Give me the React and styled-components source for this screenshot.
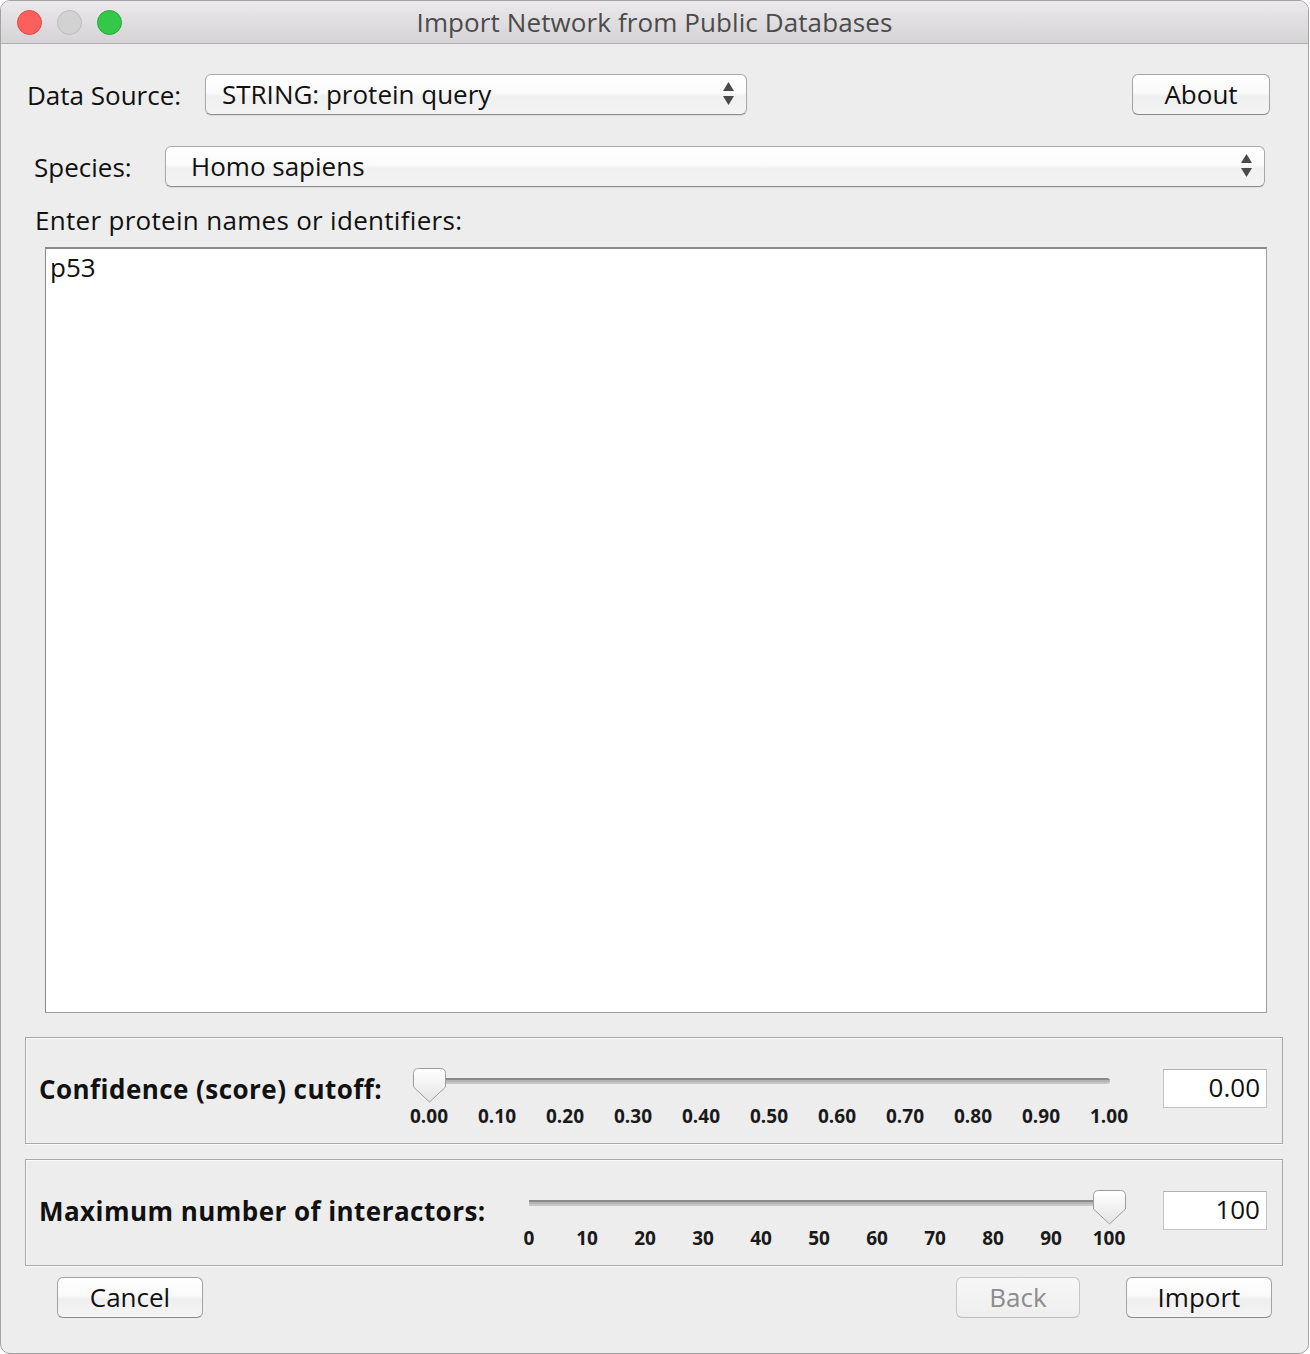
import React from 'react';
import styled, { createGlobalStyle } from 'styled-components';

const GlobalStyle = createGlobalStyle`
  html, body {
    margin: 0;
    padding: 0;
    background: #ffffff;
  }
  * {
    box-sizing: border-box;
  }
`;

const Window = styled.div`
  width: 1309px;
  height: 1354px;
  border: 1px solid #a3a3a3;
  border-radius: 10px;
  overflow: hidden;
  background: #ededed;
  font-family: "Open Sans", "Liberation Sans", sans-serif;
  color: #111;
  display: flex;
  flex-direction: column;
`;

const TitleBar = styled.div`
  height: 42px;
  flex: none;
  display: grid;
  grid-template-columns: 1fr auto 1fr;
  align-items: center;
  background: linear-gradient(#ebe9eb, #d5d3d5);
  border-bottom: 1px solid #b1b1b1;
  box-sizing: content-box;
`;

const Lights = styled.div`
  display: flex;
  gap: 15px;
  padding-left: 16px;
`;

const Light = styled.span`
  width: 25px;
  height: 25px;
  border-radius: 50%;
  background: ${p => p.$fill};
  border: 1px solid ${p => p.$edge};
`;

const Title = styled.div`
  font-size: 26px;
  color: #4b4b4b;
  letter-spacing: 0.1px;
`;

const Body = styled.div`
  flex: 1;
  display: flex;
  flex-direction: column;
`;

const Row = styled.div`
  display: flex;
  align-items: center;
  padding-left: ${p => p.$left}px;
  margin-top: ${p => p.$top}px;
`;

const FieldLabel = styled.div`
  width: ${p => p.$width}px;
  flex: none;
  font-size: 26px;
  line-height: 30px;
`;

const Select = styled.div`
  width: ${p => p.$width}px;
  height: 41px;
  display: flex;
  align-items: center;
  justify-content: space-between;
  padding: 0 12px 2px ${p => p.$pad}px;
  font-size: 26px;
  border: 1px solid #a9a9a9;
  border-bottom-color: #8e8e8e;
  border-radius: 6px;
  background: linear-gradient(#ffffff 0%, #fbfbfb 45%, #f0f0f0 55%, #f3f3f3 100%);
  box-shadow: 0 1px 1px rgba(0, 0, 0, 0.08);
`;

const Button = styled.div`
  width: ${p => p.$width}px;
  height: 41px;
  display: flex;
  align-items: center;
  justify-content: center;
  padding-bottom: 2px;
  font-size: 26px;
  color: ${p => (p.$disabled ? '#8c8c8c' : '#111')};
  border: 1px solid ${p => (p.$disabled ? '#c6c6c6' : '#a3a3a3')};
  border-bottom-color: ${p => (p.$disabled ? '#bcbcbc' : '#8a8a8a')};
  border-radius: 6px;
  background: ${p => (p.$disabled
    ? 'linear-gradient(#f7f7f7, #eeeeee)'
    : 'linear-gradient(#ffffff 0%, #fafafa 45%, #efefef 55%, #f4f4f4 100%)')};
`;

const Spacer = styled.div`
  flex: 1;
`;

const Prompt = styled.div`
  margin: 18px 0 0 34px;
  font-size: 26px;
  line-height: 30px;
  letter-spacing: 0.3px;
`;

const TextArea = styled.div`
  margin: 12px 0 0 44px;
  width: 1222px;
  height: 766px;
  background: #fff;
  border: 1px solid #a0a0a0;
  border-top: 2px solid #8a8a8a;
  border-left-color: #8a8a8a;
  padding: 3px 4px;
  font-size: 26px;
  line-height: 30px;
`;

const Panel = styled.div`
  margin: ${p => p.$top}px 0 0 24px;
  width: 1258px;
  height: 107px;
  display: flex;
  align-items: flex-start;
  padding: 0 15px 0 13px;
  border: 1px solid #a8a8a8;
  box-shadow: inset 1px 1px 0 #fafafa, 0 1px 0 #fafafa;
`;

const PanelLabel = styled.div`
  width: ${p => p.$width}px;
  flex: none;
  margin-top: 36px;
  font-size: 26px;
  line-height: 30px;
  font-weight: 700;
  letter-spacing: 0.45px;
`;

const SliderBox = styled.div`
  width: ${p => p.$width}px;
  flex: none;
  margin-top: ${p => p.$top}px;
`;

const TrackRow = styled.div`
  position: relative;
  height: 34px;
`;

const Track = styled.div`
  position: absolute;
  top: 10px;
  left: ${p => p.$left}px;
  width: ${p => p.$width}px;
  height: 6px;
  border-radius: 0 3px 3px 0;
  background: linear-gradient(#8a8a8a 0 2px, #b4b4b4 2px 4px, #c6c6c6 4px);
`;

const Thumb = styled.svg`
  position: absolute;
  top: 0;
`;

const Ticks = styled.div`
  display: flex;
  justify-content: space-between;
  margin-top: 3px;
`;

const Tick = styled.span`
  width: 56px;
  text-align: center;
  font-size: 19px;
  line-height: 22px;
  font-weight: 700;
  color: #1a1a1a;
`;

const ValueField = styled.div`
  width: 104px;
  height: 39px;
  flex: none;
  margin: 31px 0 0 26px;
  background: #fff;
  border: 1px solid #c3c3c3;
  border-top-color: #b0b0b0;
  text-align: right;
  padding: 0 6px;
  font-size: 26px;
  line-height: 35px;
`;

const Footer = styled.div`
  display: flex;
  align-items: center;
  margin-top: 11px;
  padding: 0 36px 0 56px;
`;

const Arrows = () => (
  <svg width="11" height="24" viewBox="0 0 11 24">
    <path d="M5.5 0 L11 9 L0 9 Z" fill="#4a4a4a" />
    <path d="M0 14 L11 14 L5.5 23 Z" fill="#4a4a4a" />
  </svg>
);

const Slider = ({ width, top, trackLeft, trackWidth, first, step, value, labels }) => {
  const center = first + value * step * (labels.length - 1);
  return (
    <SliderBox $width={width} $top={top}>
      <TrackRow>
        <Track $left={trackLeft} $width={trackWidth} />
        <Thumb width="33" height="35" viewBox="0 0 33 35" style={{ left: center - 16.5 }}>
          <defs>
            <linearGradient id="thumbFill" x1="0" y1="0" x2="0" y2="1">
              <stop offset="0" stopColor="#ffffff" />
              <stop offset="1" stopColor="#e4e4e4" />
            </linearGradient>
          </defs>
          <path
            d="M5.5 0.5 H27.5 Q32.5 0.5 32.5 5.5 V19 L16.5 34 L0.5 19 V5.5 Q0.5 0.5 5.5 0.5 Z"
            fill="url(#thumbFill)"
            stroke="#9c9c9c"
          />
        </Thumb>
      </TrackRow>
      <Ticks>
        {labels.map(l => (
          <Tick key={l}>{l}</Tick>
        ))}
      </Ticks>
    </SliderBox>
  );
};

const scoreTicks = ['0.00', '0.10', '0.20', '0.30', '0.40', '0.50', '0.60', '0.70', '0.80', '0.90', '1.00'];
const countTicks = ['0', '10', '20', '30', '40', '50', '60', '70', '80', '90', '100'];

const App = () => {
  return (
    <>
      <GlobalStyle />
      <Window>
        <TitleBar>
          <Lights>
            <Light $fill="#fc605c" $edge="#de4a46" />
            <Light $fill="#d2d2d2" $edge="#bdbdbd" />
            <Light $fill="#34c84a" $edge="#27a83b" />
          </Lights>
          <Title>Import Network from Public Databases</Title>
          <div />
        </TitleBar>

        <Body>
          <Row $left={26} $top={30} style={{ paddingRight: 38 }}>
            <FieldLabel $width={178}>Data Source:</FieldLabel>
            <Select $width={542} $pad={16}>
              <span>STRING: protein query</span>
              <Arrows />
            </Select>
            <Spacer />
            <Button $width={138}>About</Button>
          </Row>

          <Row $left={33} $top={31}>
            <FieldLabel $width={131}>Species:</FieldLabel>
            <Select $width={1100} $pad={25}>
              <span>Homo sapiens</span>
              <Arrows />
            </Select>
          </Row>

          <Prompt>Enter protein names or identifiers:</Prompt>
          <TextArea>p53</TextArea>

          <Panel $top={24}>
            <PanelLabel $width={362}>Confidence (score) cutoff:</PanelLabel>
            <Slider
              width={736}
              top={30}
              trackLeft={15}
              trackWidth={694}
              first={28}
              step={68}
              value={0}
              labels={scoreTicks}
            />
            <ValueField>0.00</ValueField>
          </Panel>

          <Panel $top={15}>
            <PanelLabel $width={462}>Maximum number of interactors:</PanelLabel>
            <Slider
              width={636}
              top={30}
              trackLeft={28}
              trackWidth={581}
              first={28}
              step={58}
              value={1}
              labels={countTicks}
            />
            <ValueField>100</ValueField>
          </Panel>

          <Footer>
            <Button $width={146}>Cancel</Button>
            <Spacer />
            <Button $width={124} $disabled>Back</Button>
            <Button $width={146} style={{ marginLeft: 46 }}>Import</Button>
          </Footer>
        </Body>
      </Window>
    </>
  );
};

export default App;
